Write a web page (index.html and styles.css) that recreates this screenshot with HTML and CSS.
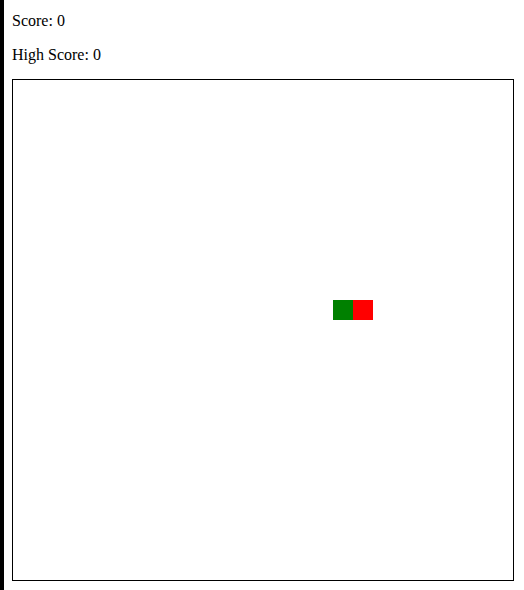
FILE: index.html
```html
<!DOCTYPE html>
<html>
<head>
<meta charset="utf-8">
<title>Snake</title>
<link rel="stylesheet" href="styles.css">
</head>
<body>
<p class="score">Score: 0</p>
<p class="score high">High Score: 0</p>
<div class="board">
  <div class="cell head" style="grid-column: 17; grid-row: 12;"></div>
  <div class="cell food" style="grid-column: 18; grid-row: 12;"></div>
</div>
</body>
</html>
```
FILE: styles.css
```css
html, body {
  margin: 0;
  padding: 0;
  background: #fff;
}
body {
  border-left: 4px solid #000;
  padding: 12px 8px 0 8px;
  min-height: 590px;
  box-sizing: border-box;
  font-family: "Liberation Serif", "Times New Roman", serif;
  font-size: 16px;
  color: #000;
}
.score {
  margin: 0 0 16px 0;
  line-height: 18px;
}
.score.high {
  margin-bottom: 15px;
}
.board {
  width: 500px;
  height: 500px;
  border: 1px solid #000;
  display: grid;
  grid-template-columns: repeat(25, 20px);
  grid-template-rows: repeat(25, 20px);
}
.cell {
  width: 20px;
  height: 20px;
}
.head {
  background: #008000;
}
.food {
  background: #ff0000;
}
```
